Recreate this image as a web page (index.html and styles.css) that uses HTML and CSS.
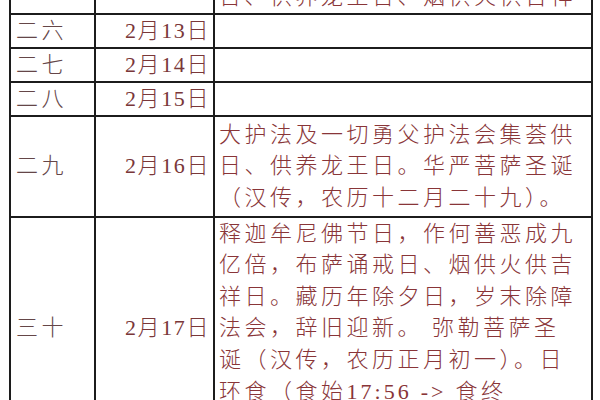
FILE: index.html
```html
<!DOCTYPE html>
<html lang="zh-CN">
<head>
<meta charset="utf-8">
<link rel="stylesheet" href="styles.css">
</head>
<body>
<div class="sheet">
  <table class="cal">
    <colgroup>
      <col class="c-day">
      <col class="c-date">
      <col class="c-desc">
    </colgroup>
    <tbody>
      <tr class="row-prev">
        <td class="day"></td>
        <td class="date"></td>
        <td class="desc">日、供养龙王日、烟供火供吉祥</td>
      </tr>
      <tr class="row-a">
        <td class="day">二六</td>
        <td class="date">2月13日</td>
        <td class="desc"></td>
      </tr>
      <tr class="row-b">
        <td class="day">二七</td>
        <td class="date">2月14日</td>
        <td class="desc"></td>
      </tr>
      <tr class="row-a">
        <td class="day">二八</td>
        <td class="date">2月15日</td>
        <td class="desc"></td>
      </tr>
      <tr class="row-tall">
        <td class="day">二九</td>
        <td class="date">2月16日</td>
        <td class="desc">大护法及一切勇父护法会集荟供<br>日、供养龙王日。华严菩萨圣诞<br>（汉传，农历十二月二十九）。</td>
      </tr>
      <tr class="row-long">
        <td class="day">三十</td>
        <td class="date">2月17日</td>
        <td class="desc">释迦牟尼佛节日，作何善恶成九<br>亿倍，布萨诵戒日、烟供火供吉<br>祥日。藏历年除夕日，岁末除障<br>法会，辞旧迎新。 弥勒菩萨圣<br>诞（汉传，农历正月初一）。日<br>环食（食始<span class="num">17:56</span> <span class="num">-&gt;</span> 食终<br><span class="num">19:35</span>）。</td>
      </tr>
    </tbody>
  </table>
</div>
</body>
</html>
```

FILE: styles.css
```css
html, body {
  margin: 0;
  padding: 0;
  overflow: hidden;
  background: #ffffff;
}

.sheet {
  padding-left: 9px;
}

.cal {
  border-collapse: separate;
  border-spacing: 0;
  table-layout: fixed;
  width: 584px;
  margin-top: -27px;
  border-top: 2px solid #1c1c1c;
  border-left: 2px solid #1c1c1c;
  font-family: "Liberation Serif", "Noto Sans CJK SC", serif;
  font-size: 22px;
  font-weight: 300;
  line-height: 31.6px;
}

.c-day { width: 85px; }
.c-date { width: 119px; }
.c-desc { width: 378px; }

.cal td {
  box-sizing: border-box;
  border-right: 2px solid #1c1c1c;
  border-bottom: 2px solid #1c1c1c;
  padding: 0;
  vertical-align: middle;
  white-space: nowrap;
  overflow: hidden;
}

.cal .day {
  padding-left: 5px;
  color: #654648;
  letter-spacing: 3.5px;
}

.cal .date {
  text-align: right;
  padding-right: 3px;
  color: #7a3739;
  letter-spacing: 1.6px;
}

.cal .desc {
  padding-left: 4px;
  color: #893538;
  letter-spacing: 3.5px;
}

.num {
  letter-spacing: 3px;
}

.row-prev td {
  height: 40px;
  vertical-align: bottom;
}

.row-a td { height: 34px; }
.row-b td { height: 33px; }
.row-tall td { height: 101px; }
.row-long td { vertical-align: middle; }
```
